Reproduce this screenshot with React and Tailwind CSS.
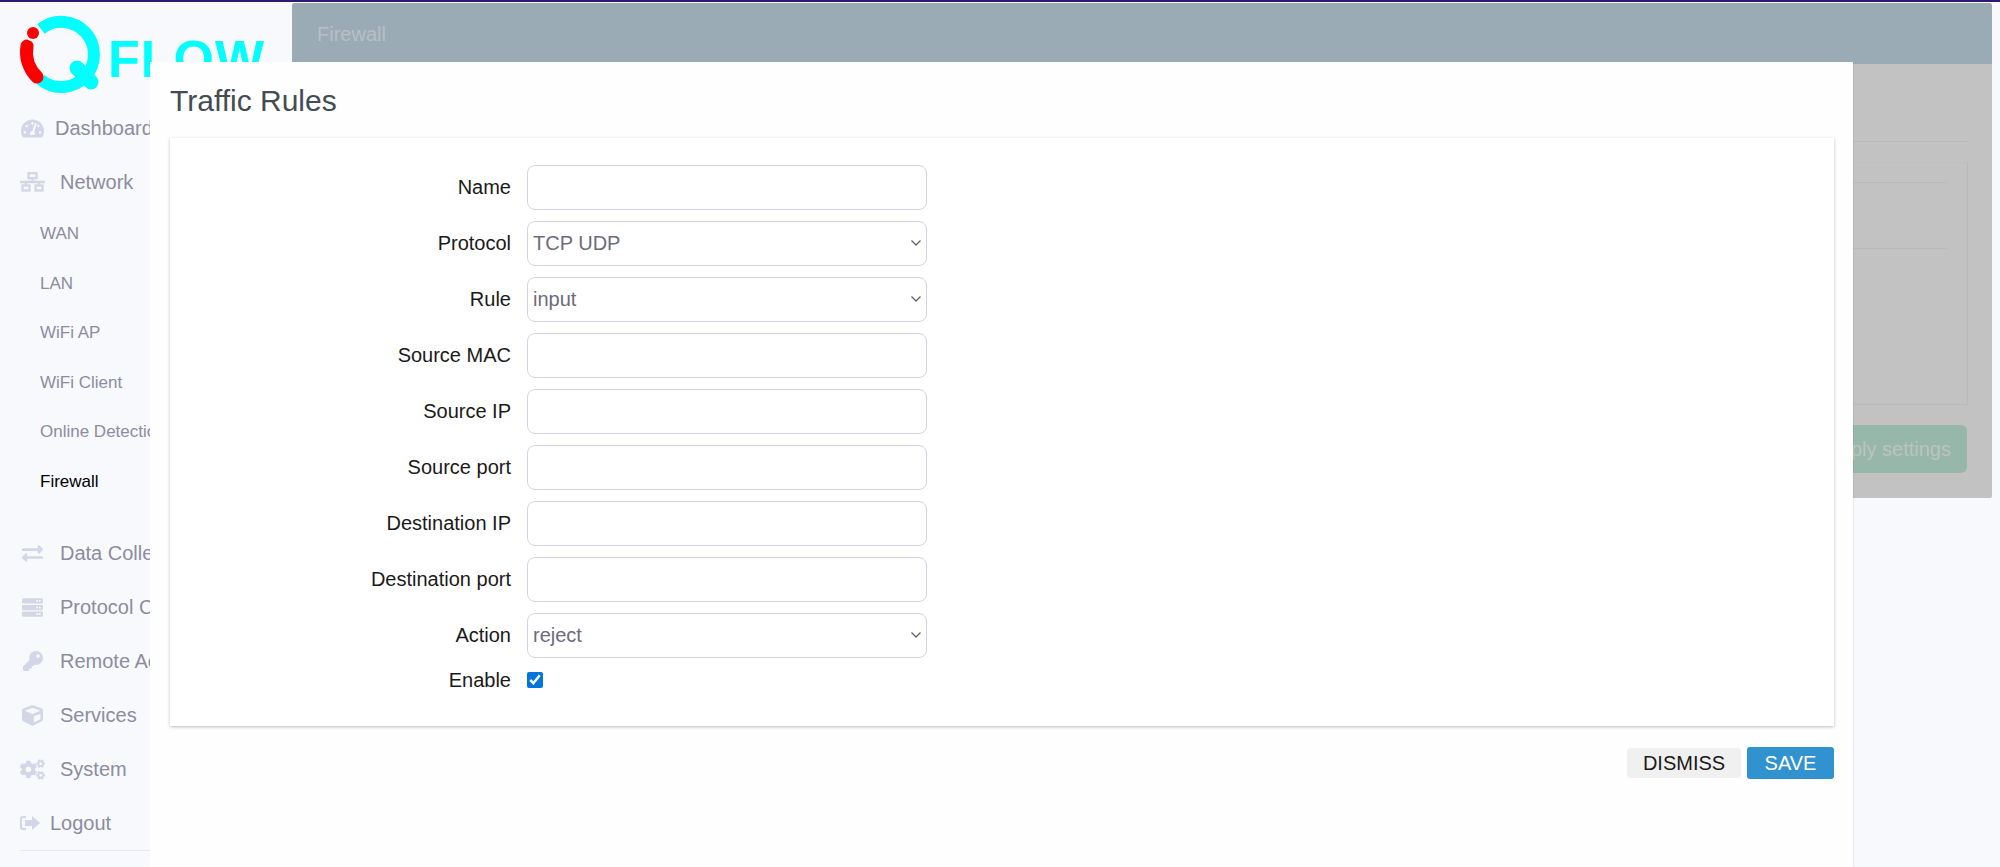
import { FaTachometerAlt, FaExchangeAlt, FaServer, FaKey, FaCube, FaCogs } from "react-icons/fa";

const subItems = ["WAN", "LAN", "WiFi AP", "WiFi Client", "Online Detection", "Firewall"];

const formRows = [
  { label: "Name" },
  { label: "Protocol", select: "TCP UDP" },
  { label: "Rule", select: "input" },
  { label: "Source MAC" },
  { label: "Source IP" },
  { label: "Source port" },
  { label: "Destination IP" },
  { label: "Destination port" },
  { label: "Action", select: "reject" },
];

const Logo = () => (
  <div className="relative h-[100px] shrink-0">
    <svg width="110" height="98" viewBox="0 2 110 98" fill="none">
      {/* cyan Q ring */}
      <path d="M41 29 A 32.6 32.6 0 1 1 40.5 79.5" stroke="#00ffff" strokeWidth="12" />
      <path d="M77 68 L91 82" stroke="#00ffff" strokeWidth="15" strokeLinecap="round" />
      {/* red i */}
      <path d="M27 46 A 35 35 0 0 0 37 77" stroke="#ff0000" strokeWidth="13" strokeLinecap="round" />
      <circle cx="33" cy="33" r="8.5" fill="#f8f9fd" />
      <circle cx="33" cy="33" r="6" fill="#ff0000" />
    </svg>
    <span className="absolute left-[108px] top-[27px] text-[52px] leading-[60px] font-bold text-[#00ffff] tracking-[1px]">FLOW</span>
  </div>
);

const NetworkIcon = () => (
  <svg width="25" height="20" viewBox="0 0 25 20" fill="none" stroke="#d3d6e6" strokeWidth="2.3">
    <rect x="8.5" y="1.2" width="8" height="5" />
    <rect x="2.5" y="13.5" width="7" height="5" />
    <rect x="15.5" y="13.5" width="7" height="5" />
    <path d="M0 10h25M12.5 6v4M6 10v3.5M19 10v3.5" />
  </svg>
);

const LogoutIcon = () => (
  <svg className="-ml-[5px]" width="20" height="16" viewBox="0 0 20 16" fill="#d3d6e6">
    <path d="M6 1H3a3 3 0 0 0-3 3v8a3 3 0 0 0 3 3h3v-2H3a1 1 0 0 1-1-1V4a1 1 0 0 1 1-1h3z" />
    <path d="M12 1l8 7-8 7v-4H5V5h7z" />
  </svg>
);

const MainItem = ({ icon, label, textLeft = "pl-[15px]", className = "h-[54px]" }) => (
  <div className={`flex items-center text-[20px] text-[#8c8c9f] ${className}`}>
    <span className="flex w-[25px] justify-center text-[#d3d6e6]">{icon}</span>
    <span className={textLeft}>{label}</span>
  </div>
);

const Sidebar = () => (
  <aside className="flex w-[292px] shrink-0 flex-col overflow-hidden whitespace-nowrap pl-[20px]">
    <div className="-ml-[20px]">
      <Logo />
    </div>
    <div className="flex flex-col">
      <MainItem icon={<FaTachometerAlt size={23} />} label={<span className="-ml-[4px]">Dashboard</span>} textLeft="pl-[14px]" className="h-[52px]" />
      <MainItem icon={<NetworkIcon />} label="Network" className="h-[55px]" />
      <div className="flex flex-col pl-[20px] pb-[20px] text-[17px] text-[#8c8c9f]">
        {subItems.map((s) => (
          <div key={s} className={`flex h-[49.5px] items-center ${s === "Firewall" ? "text-black" : ""}`}>
            {s}
          </div>
        ))}
      </div>
      <MainItem icon={<FaExchangeAlt size={21} />} label="Data Collection" />
      <MainItem icon={<FaServer size={21} />} label="Protocol Conversion" />
      <MainItem icon={<FaKey size={20} />} label="Remote Access" />
      <MainItem icon={<FaCube size={21} />} label="Services" />
      <MainItem icon={<FaCogs size={25} />} label="System" />
      <MainItem icon={<LogoutIcon />} label="Logout" textLeft="pl-[5px]" />
      <div className="h-px bg-[#e7e8f0]" />
    </div>
  </aside>
);

// dimmed page behind the modal
const FirewallPanel = () => (
  <main className="mt-px flex h-[495px] w-[1700px] shrink-0 flex-col rounded-t-[3px] rounded-b-[2px] bg-[#c2c2c2]">
    <div className="flex h-[61px] shrink-0 items-center rounded-t-[3px] bg-[#9aabb6] pl-[25px] text-[20px] text-[#b9bfc4]">
      Firewall
    </div>
    <div className="flex flex-1 flex-col items-end pr-[24px] pt-[77px]">
      <div className="h-px w-full bg-[#b9b9b9]" />
      <div className="mt-[20px] flex h-[243px] w-full flex-col items-end border border-[#b9b9b9] border-t-[#bfbfbf] pr-[20px] pt-[19px]">
        <div className="h-px w-full bg-[#b9b9b9]" />
        <div className="mt-[65px] h-px w-full bg-[#b9b9b9]" />
      </div>
      <button className="mr-px mt-[20px] flex h-[48px] items-center rounded-[6px] bg-[#96b7aa] px-[16px] text-[20px] text-[#bcc4c0]">
        Apply settings
      </button>
    </div>
  </main>
);

const Chevron = () => (
  <svg className="absolute right-[4px] top-1/2 -translate-y-1/2" width="12" height="8" viewBox="0 0 12 8" fill="none" stroke="#5f6368" strokeWidth="1.3">
    <path d="M1.5 1.5L6 6l4.5-4.5" />
  </svg>
);

const FormRow = ({ label, select }) => (
  <div className="flex h-[44px] items-center gap-[16px]">
    <label className="w-[326px] text-right text-[20px] text-[#1a1a1a]">{label}</label>
    {select ? (
      <div className="relative flex h-[45px] w-[400px] items-center rounded-[8px] border-[1.5px] border-[#d3d3e6] bg-white pl-[5px] text-[20px] text-[#6c6c7c]">
        {select}
        <Chevron />
      </div>
    ) : (
      <input type="text" className="h-[45px] w-[400px] rounded-[8px] border-[1.5px] border-[#d3d3e6] bg-white outline-none" />
    )}
  </div>
);

const TrafficRulesModal = () => (
  <div className="absolute left-[150px] top-[62px] bottom-0 w-[1703px] bg-[#fefefe] pl-[20px] pr-[19px] shadow-[1px_0_0_rgba(0,0,0,0.06)]">
    <h2 className="flex h-[76px] items-center text-[30px] text-[#434c53]">Traffic Rules</h2>
    <div className="flex h-[588px] flex-col gap-[12px] bg-white pl-[15px] pt-[27px] shadow-[0_1px_3px_rgba(0,0,0,0.25)]">
      <div className="flex flex-col gap-[12px]">
        {formRows.map((r) => (
          <FormRow key={r.label} {...r} />
        ))}
      </div>
      <div className="mt-[1px] flex h-[20px] items-center gap-[16px]">
        <label className="w-[326px] text-right text-[20px] text-[#1a1a1a]">Enable</label>
        <input type="checkbox" defaultChecked className="h-[16px] w-[16px] accent-[#0075db]" />
      </div>
    </div>
    <div className="mt-[21px] flex items-center justify-end gap-[6px] text-[20px]">
      <button className="h-[30px] w-[114px] rounded-[3px] bg-[#f0f0f0] text-[#1a1a1a]">DISMISS</button>
      <button className="h-[32px] w-[87px] rounded-[3px] bg-[#3192d0] text-white">SAVE</button>
    </div>
  </div>
);

export default function App() {
  return (
    <div className="relative h-[867px] w-[2000px] overflow-hidden bg-[#f8f9fd] font-['Liberation_Sans',Arial,sans-serif]">
      <div className="h-[2px] bg-[#2e1a6e]" />
      <div className="flex">
        <Sidebar />
        <FirewallPanel />
      </div>
      <TrafficRulesModal />
    </div>
  );
}
